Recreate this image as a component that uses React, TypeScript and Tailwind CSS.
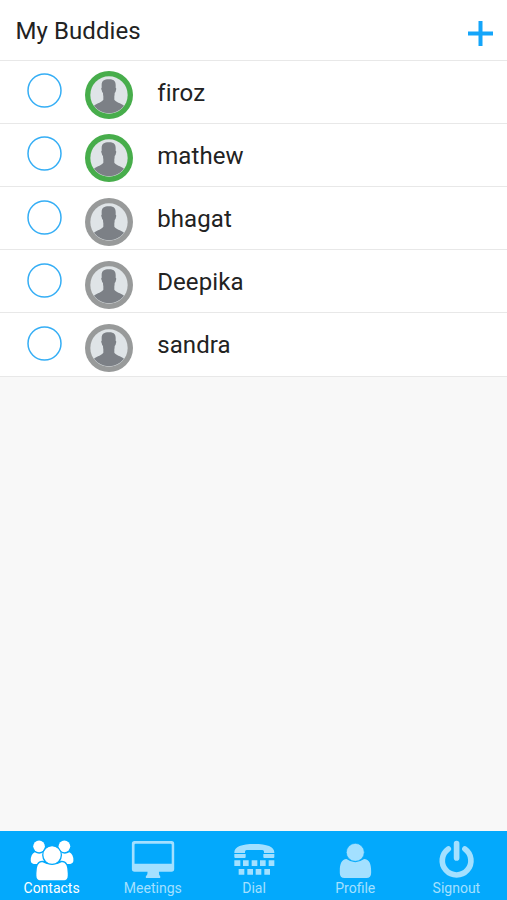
import type { ReactNode } from "react";

type Buddy = { name: string; online: boolean };

const buddies: Buddy[] = [
  { name: "firoz", online: true },
  { name: "mathew", online: true },
  { name: "bhagat", online: false },
  { name: "Deepika", online: false },
  { name: "sandra", online: false },
];

function Avatar({ online }: { online: boolean }) {
  return (
    <svg viewBox="0 0 144 144" className="mt-[10.6px] ml-[23.4px] h-12 w-12 shrink-0">
      <circle cx="72" cy="72" r="72" fill={online ? "#47ad4b" : "#989a9a"} />
      <circle cx="72" cy="72" r="56" fill="#dfe4e7" />
      <path
        fill="#7c8086"
        d="M50 45C49 30 57 25 71 25C86 24 93 31 92 45V50Q95 52 93 57Q92 64 89 66Q89 73 88 76V86C92 93 107 96 117 104A56 56 0 0 1 27 104C37 96 51 93 55 86V76Q54 72 54 66Q51 64 50 57Q47 52 50 50Z"
      />
    </svg>
  );
}

function BuddyRow({ name, online }: Buddy) {
  return (
    <li className="flex h-[63.2px] items-start border-b border-[#e8e8e8] bg-white pl-[27px]">
      <svg viewBox="0 0 35 35" className="mt-[12.6px] h-[35px] w-[35px] shrink-0">
        <circle cx="17.5" cy="17.5" r="16.5" fill="none" stroke="#35aef5" strokeWidth="1.5" />
      </svg>
      <Avatar online={online} />
      <span className="mt-[16px] ml-[23.8px] text-[24px] leading-[32px] tracking-[0.1px]">{name}</span>
    </li>
  );
}

const tabs: { label: string; viewBox: string; active?: boolean; icon: ReactNode }[] = [
  {
    label: "Contacts",
    viewBox: "88.8 39 132 129",
    active: true,
    icon: (
      <>
        <circle cx="116" cy="64" r="17.5" />
        <circle cx="192" cy="64" r="17.5" />
        <path d="M103 82Q116 90 130 82V108Q120 110 113 117Q91 119 91 107Q91 87 103 82ZM207 82Q193 90 180 82V108Q189 110 196 117Q219 119 219 107Q219 87 207 82Z" />
        <path
          stroke="#03a9fc"
          strokeWidth="4"
          d="M126 109Q155 126 184 109C197 109 204 124 204 145V152Q204 168 188 168H122Q106 168 106 152V145C106 124 113 109 126 109Z"
        />
        <circle cx="155" cy="90" r="28" stroke="#03a9fc" strokeWidth="4" />
      </>
    ),
  },
  {
    label: "Meetings",
    viewBox: "62.4 39 132 129",
    icon: (
      <path
        fillRule="evenodd"
        d="M73 48H184Q192 48 192 56V132Q192 140 184 140H146Q146 151 150 153V159H107V153Q112 151 112 140H73Q65 140 65 132V56Q65 48 73 48ZM76 56Q73 56 73 59V116H184.500V59Q184.500 56 181 56Z"
      />
    ),
  },
  {
    label: "Dial",
    viewBox: "51 39 132 129",
    icon: (
      <>
        <path d="M58 84C57 65 79 57 118 57S179 65 178 84H147V80Q147 75 142 75H95Q90 75 90 80V84Z" />
        <path d="M58 87H92V96Q92 99 89 99H61Q58 99 58 96ZM145 87H178V96Q178 99 175 99H148Q145 99 145 96Z" />
        <path d="M58 106H76V123H58ZM84 106H101V123H84ZM110 106H127V123H110ZM135 106H152V123H135ZM161 106H178V123H161ZM71 132H88V149H71ZM97 132H114V149H97ZM122 132H139V149H122ZM148 132H165V149H148Z" />
      </>
    ),
  },
  {
    label: "Profile",
    viewBox: "39.6 39 132 129",
    icon: (
      <>
        <circle cx="106.5" cy="82" r="27" stroke="#03a9fc" strokeWidth="2" />
        <path d="M80 102Q106 121 133 102C148 102 154 117 154 137V144Q154 159 140 159H74Q60 159 60 144V137C60 117 66 102 80 102Z" />
      </>
    ),
  },
  {
    label: "Signout",
    viewBox: "43.2 39 132 129",
    icon: (
      <path
        fill="none"
        stroke="currentColor"
        strokeWidth="17"
        strokeLinecap="round"
        d="M111 56V99M86 72A43 43 0 1 0 136 72"
      />
    ),
  },
];

export default function App() {
  return (
    <main className="flex h-[900px] w-full flex-col overflow-hidden bg-[#f8f8f8] font-['Roboto','Liberation_Sans',sans-serif] text-[#222222]">
      <header className="flex h-[60.6px] shrink-0 items-start justify-between border-b border-[#e8e8e8] bg-white pr-[14px] pl-[15.4px]">
        <h1 className="mt-[14.6px] text-[24px] leading-[32px] tracking-[0.1px]">My Buddies</h1>
        <svg viewBox="0 0 25 25" className="mt-[21px] h-[25px] w-[25px]" aria-label="Add buddy">
          <path d="M12.5 0V25M0 12.5H25" stroke="#14a5fa" strokeWidth="4" />
        </svg>
      </header>
      <ul className="shrink-0">
        {buddies.map((buddy) => (
          <BuddyRow key={buddy.name} {...buddy} />
        ))}
      </ul>
      <nav className="mt-auto flex h-[69px] shrink-0 bg-[#03a9fc] pl-px">
        {tabs.map(({ label, viewBox, active, icon }) => (
          <button
            key={label}
            className={`flex flex-1 flex-col items-center pt-[7px] ${active ? "text-white" : "text-[#a3e0ff]"}`}
          >
            <svg viewBox={viewBox} className="h-[43px] w-[44px] shrink-0" fill="currentColor">
              {icon}
            </svg>
            <span className="text-[14px] leading-[14px]">{label}</span>
          </button>
        ))}
      </nav>
    </main>
  );
}
